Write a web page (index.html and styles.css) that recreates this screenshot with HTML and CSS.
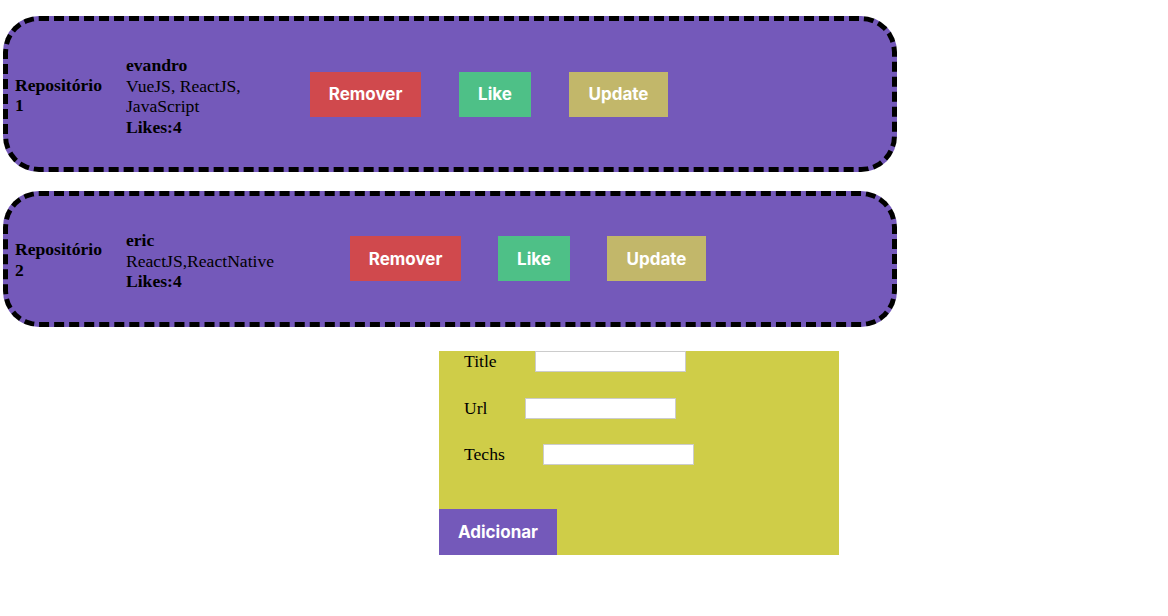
FILE: index.html
```html
<!DOCTYPE html>
<html lang="pt-BR">
<head>
<meta charset="utf-8">
<title>Repositórios</title>
<link rel="stylesheet" href="styles.css">
</head>
<body>
<div class="app">
  <ul class="repo-list">
    <li class="repo">
      <strong class="repo-title">Repositório 1</strong>
      <div class="repo-info">
        <strong>evandro</strong>
        <span>VueJS, ReactJS, JavaScript</span>
        <strong>Likes:4</strong>
      </div>
      <button class="btn btn-remove" type="button">Remover</button>
      <button class="btn btn-like" type="button">Like</button>
      <button class="btn btn-update" type="button">Update</button>
    </li>
    <li class="repo">
      <strong class="repo-title">Repositório 2</strong>
      <div class="repo-info repo-info-wide">
        <strong>eric</strong>
        <span>ReactJS,ReactNative</span>
        <strong>Likes:4</strong>
      </div>
      <button class="btn btn-remove" type="button">Remover</button>
      <button class="btn btn-like" type="button">Like</button>
      <button class="btn btn-update" type="button">Update</button>
    </li>
  </ul>

  <form class="repo-form">
    <div class="field field-title">
      <label for="title">Title</label>
      <input id="title" type="text">
    </div>
    <div class="field field-url">
      <label for="url">Url</label>
      <input id="url" type="text">
    </div>
    <div class="field field-techs">
      <label for="techs">Techs</label>
      <input id="techs" type="text">
    </div>
    <button class="btn btn-add" type="button">Adicionar</button>
  </form>
</div>
</body>
</html>
```
FILE: styles.css
```css
* {
  box-sizing: border-box;
}

body {
  margin: 0;
  background: #ffffff;
  font-family: "Liberation Serif", "Times New Roman", serif;
  font-size: 17.6px;
  color: #000;
}

.app {
  padding: 16px 0 0 3px;
}

.repo-list {
  list-style: none;
  margin: 0;
  padding: 0;
  width: 894px;
  display: flex;
  flex-direction: column;
  gap: 19px;
}

.repo {
  display: flex;
  align-items: center;
  background: #7459ba;
  border: 5px dashed #000;
  border-radius: 36px;
  padding: 32px 7px;
  line-height: 20.5px;
}

.repo-title {
  width: 96px;
  margin: 1px 15px -1px 0;
  flex: none;
}

.repo-info {
  display: flex;
  flex-direction: column;
  width: 146px;
  margin: 2px 38px -2px 0;
  flex: none;
}

.repo-info-wide {
  width: 186px;
}

.btn {
  border: 0;
  border-radius: 0;
  height: 45px;
  padding: 0;
  color: #fff;
  font-family: Inter, "Noto Sans", sans-serif;
  font-weight: 700;
  font-size: 17px;
  cursor: pointer;
  flex: none;
}

.btn-remove {
  width: 111px;
  background: #d0494d;
}

.btn-like {
  width: 72px;
  margin-left: 38px;
  background: #4ec087;
}

.btn-update {
  width: 99px;
  margin-left: 38px;
  background: #c2b76a;
}

.repo-info-wide ~ .btn-like,
.repo-info-wide ~ .btn-update {
  margin-left: 37px;
}

.repo-form {
  width: 400px;
  height: 204px;
  margin: 24px 0 0 436px;
  background: #cfcd48;
  display: flex;
  flex-direction: column;
  align-items: flex-start;
}

.field {
  display: flex;
  align-items: center;
  padding-left: 25px;
  height: 21px;
  margin-bottom: 26px;
}

.field-url {
  margin-bottom: 25px;
}

.field-techs {
  margin-bottom: 0;
}

.field label {
  margin-right: 38px;
  line-height: 20px;
}

.field input {
  width: 151px;
  height: 21px;
  border: 1px solid #cccccc;
  background: #fff;
  padding: 1px 2px;
  font-size: 13px;
}

.btn-add {
  margin-top: auto;
  width: 118px;
  height: 46px;
  background: #7459ba;
}
```
